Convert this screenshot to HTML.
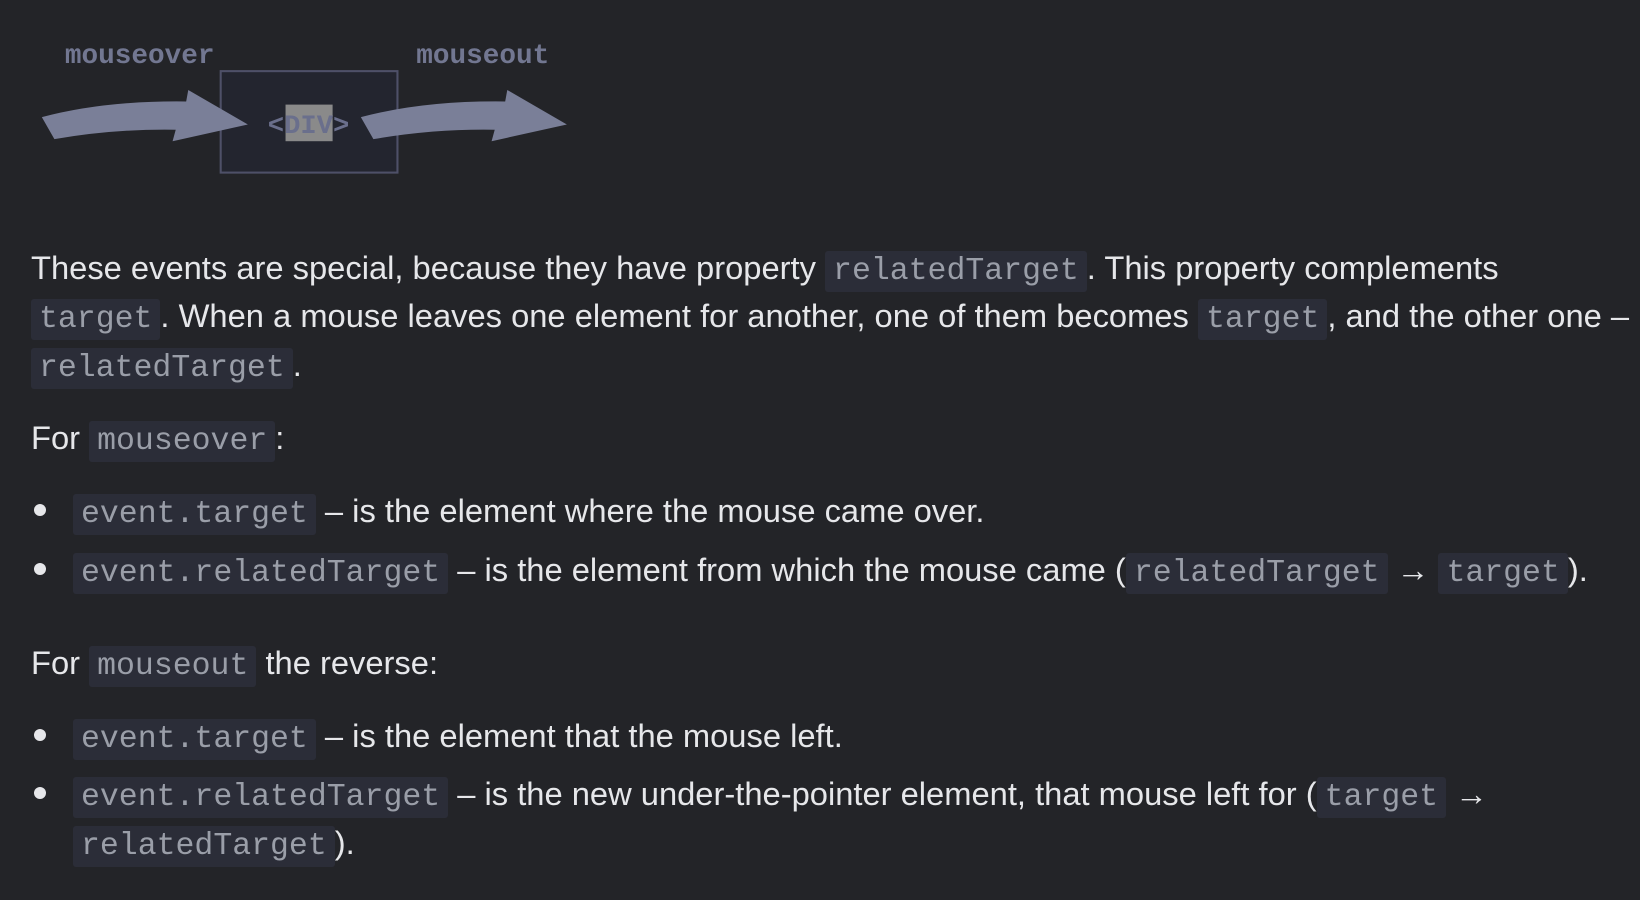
<!DOCTYPE html>
<html><head><meta charset="utf-8"><style>
html,body{margin:0;padding:0;background:#232428;width:1640px;height:900px;overflow:hidden}
body{font-family:"Liberation Sans",sans-serif;color:#e6e7ea;font-size:32.7px}
.l{position:absolute;white-space:nowrap;height:49px;line-height:49px}
code{font-family:"Liberation Mono",monospace;font-size:31.5px;color:#9a9ea8;background:#2b2d38;padding:3px 8px;border-radius:3px}
.dot{position:absolute;width:12px;height:12px;border-radius:50%;background:#e6e7ea}
</style></head><body>
<svg style="position:absolute;left:0;top:0" width="1640" height="200" viewBox="0 0 1568 191.2">
<rect x="211" y="68" width="169" height="97" fill="#23252f" stroke="#4e5068" stroke-width="2"/>
<path d="M40,112 Q100,96 178,97 L180,86 L237,119 L165,135 L168,124 Q110,123 52,133 Z" fill="#7a7f98"/>
<path transform="translate(305,0)" d="M40,112 Q100,96 178,97 L180,86 L237,119 L165,135 L168,124 Q110,123 52,133 Z" fill="#7a7f98"/>
<rect x="273" y="100" width="45" height="35" fill="#8a8a8a"/>
<text x="295" y="127" text-anchor="middle" font-family="Liberation Mono,monospace" font-weight="bold" font-size="26" fill="#6a6f8c">&lt;DIV&gt;</text>
<text x="62" y="60" font-family="Liberation Mono,monospace" font-weight="bold" font-size="26.5" fill="#727791">mouseover</text>
<text x="398" y="60" font-family="Liberation Mono,monospace" font-weight="bold" font-size="26.5" fill="#727791">mouseout</text>
</svg>
<div class="l" style="left:31px;top:243px">These events are special, because they have property <code>relatedTarget</code>. This property complements</div>
<div class="l" style="left:31px;top:291px"><code>target</code>. When a mouse leaves one element for another, one of them becomes <code>target</code>, and the other one –</div>
<div class="l" style="left:31px;top:340px"><code>relatedTarget</code>.</div>
<div class="l" style="left:31px;top:413px">For <code>mouseover</code>:</div>
<div class="dot" style="left:34px;top:504px"></div>
<div class="l" style="left:73px;top:486px"><code>event.target</code> – is the element where the mouse came over.</div>
<div class="dot" style="left:34px;top:563px"></div>
<div class="l" style="left:73px;top:545px"><code>event.relatedTarget</code> – is the element from which the mouse came (<code>relatedTarget</code> → <code>target</code>).</div>
<div class="l" style="left:31px;top:638px">For <code>mouseout</code> the reverse:</div>
<div class="dot" style="left:34px;top:729px"></div>
<div class="l" style="left:73px;top:711px"><code>event.target</code> – is the element that the mouse left.</div>
<div class="dot" style="left:34px;top:787px"></div>
<div class="l" style="left:73px;top:769px"><code>event.relatedTarget</code> – is the new under-the-pointer element, that mouse left for (<code>target</code> →</div>
<div class="l" style="left:73px;top:818px"><code>relatedTarget</code>).</div>
</body></html>
